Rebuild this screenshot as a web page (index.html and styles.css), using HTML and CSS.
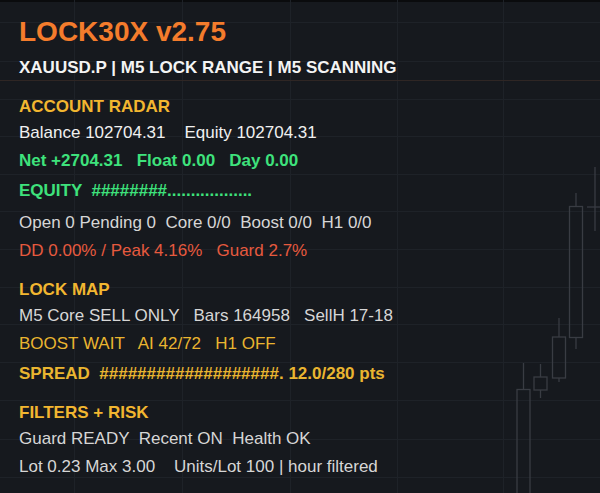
FILE: index.html
```html
<!DOCTYPE html>
<html>
<head>
  <title>LOCK30X v2.75</title>
  <link rel="stylesheet" href="styles.css">
</head>
<body>
  <!-- chart behind the panel: grid, price line and candles -->
  <svg class="chart" width="600" height="493" viewBox="0 0 600 493">
    <rect x="0" y="0" width="600" height="2" fill="#0a0b0d"/>
    <g class="grid">
      <line x1="74.5" y1="0" x2="74.5" y2="493"/>
      <line x1="182.5" y1="0" x2="182.5" y2="493"/>
      <line x1="290.5" y1="0" x2="290.5" y2="493"/>
      <line x1="397.5" y1="0" x2="397.5" y2="493"/>
      <line x1="503.5" y1="0" x2="503.5" y2="493"/>
      <line x1="0" y1="22.5" x2="600" y2="22.5"/>
      <line x1="0" y1="61.5" x2="600" y2="61.5"/>
      <line x1="0" y1="99.5" x2="600" y2="99.5"/>
      <line x1="0" y1="136.5" x2="600" y2="136.5"/>
      <line x1="0" y1="174.5" x2="600" y2="174.5"/>
      <line x1="0" y1="211.5" x2="600" y2="211.5"/>
      <line x1="0" y1="249.5" x2="600" y2="249.5"/>
      <line x1="0" y1="287.5" x2="600" y2="287.5"/>
      <line x1="0" y1="324.5" x2="600" y2="324.5"/>
      <line x1="0" y1="362.5" x2="600" y2="362.5"/>
      <line x1="0" y1="400.5" x2="600" y2="400.5"/>
      <line x1="0" y1="439.5" x2="600" y2="439.5"/>
      <line x1="0" y1="477.5" x2="600" y2="477.5"/>
    </g>
    <line class="price" x1="0" y1="80.5" x2="600" y2="80.5"/>
    <g class="candles">
      <line x1="523.5" y1="363" x2="523.5" y2="389.5"/>
      <rect x="517" y="389.5" width="13" height="120"/>
      <line x1="540.5" y1="364" x2="540.5" y2="377"/>
      <line x1="540.5" y1="390" x2="540.5" y2="398"/>
      <rect x="534" y="377" width="13" height="13"/>
      <line x1="559" y1="318" x2="559" y2="337"/>
      <line x1="559" y1="378" x2="559" y2="382"/>
      <rect x="552.5" y="337" width="13" height="41"/>
      <line x1="576" y1="193" x2="576" y2="206.5"/>
      <line x1="576" y1="337.5" x2="576" y2="349"/>
      <rect x="569.5" y="206.5" width="13" height="131"/>
      <line x1="595" y1="167" x2="595" y2="231"/>
      <line x1="587" y1="207" x2="600" y2="207"/>
    </g>
  </svg>

  <div class="panel">
    <div class="title">LOCK30X v2.75</div>
    <div class="subtitle">XAUUSD.P | M5 LOCK RANGE | M5 SCANNING</div>

    <div class="head">ACCOUNT RADAR</div>
    <div class="row white">Balance 102704.31    Equity 102704.31</div>
    <div class="row green bold">Net +2704.31   Float 0.00   Day 0.00</div>
    <div class="row green bold bump">EQUITY  ########..................</div>
    <div class="row gray gap">Open 0 Pending 0  Core 0/0  Boost 0/0  H1 0/0</div>
    <div class="row red">DD 0.00% / Peak 4.16%   Guard 2.7%</div>

    <div class="head">LOCK MAP</div>
    <div class="row gray">M5 Core SELL ONLY   Bars 164958   SellH 17-18</div>
    <div class="row yellow">BOOST WAIT   AI 42/72   H1 OFF</div>
    <div class="row yellow bold bump">SPREAD  ###################. 12.0/280 pts</div>

    <div class="head">FILTERS + RISK</div>
    <div class="row gray">Guard READY  Recent ON  Health OK</div>
    <div class="row gray">Lot 0.23 Max 3.00    Units/Lot 100 | hour filtered</div>
  </div>
</body>
</html>
```

FILE: styles.css
```css
body {
  margin: 0;
  background-color: #16191e;
  font-family: "Liberation Sans", Arial, sans-serif;
  overflow: hidden;
}
.chart {
  position: absolute;
  top: 0;
  left: 0;
  z-index: -1;
}
.grid line {
  stroke: #1e2228;
  stroke-width: 1;
}
.price {
  stroke: #2f2624;
  stroke-width: 1;
}
.candles line,
.candles rect {
  stroke: #393c43;
  stroke-width: 1.3;
  fill: none;
}
.panel {
  padding: 18px 0 0 19px;
}
.title {
  font-size: 28px;
  font-weight: bold;
  line-height: 28px;
  color: #f47c2c;
}
.subtitle {
  margin-top: 8px;
  font-size: 17px;
  font-weight: bold;
  line-height: 28px;
  color: #f4f4f4;
}
.head {
  margin-top: 13px;
  font-size: 17px;
  font-weight: bold;
  line-height: 24px;
  color: #f2b630;
}
.row {
  font-size: 17px;
  line-height: 28px;
  white-space: pre;
}
.bold {
  font-weight: bold;
}
.bump {
  margin-top: 2px; /* bars sit a bit lower */
}
.gap {
  margin-top: 4px;
}
.white  { color: #f0f0f0; }
.gray   { color: #d6d6d6; }
.green  { color: #3ee27c; }
.red    { color: #e65a3e; }
.yellow { color: #eab530; }
```
